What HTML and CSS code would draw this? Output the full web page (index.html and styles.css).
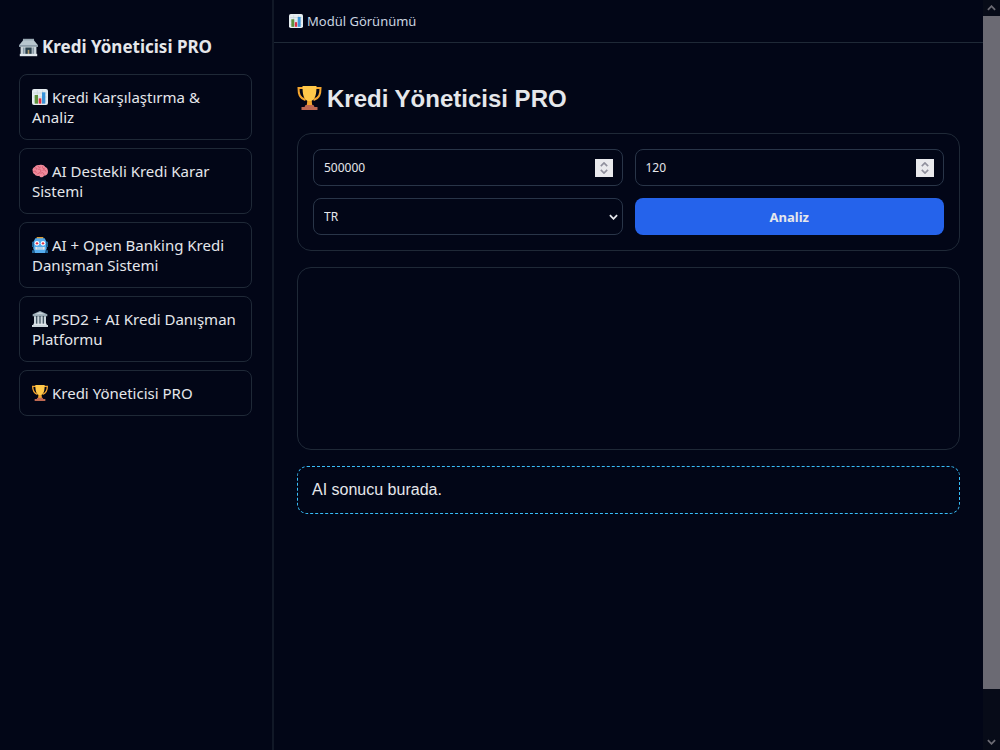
FILE: index.html
```html
<!DOCTYPE html>
<html lang="tr">
<head>
  <meta charset="UTF-8" />
  <title>Kredi Yöneticisi PRO</title>
  <meta name="viewport" content="width=device-width, initial-scale=1.0" />
  <link rel="stylesheet" href="styles.css">
</head>
<body>

  <!-- Icons -->
  <svg class="sprite" aria-hidden="true">
    <symbol id="i-bank" viewBox="0 0 24 24">
      <path fill="#9aaab4" d="M5 1h14v3H5z"/>
      <path fill="#b8c6ce" d="M5 3h14l5 6v2H0V9z"/>
      <path fill="#8899a6" d="M0 9h24v2H0z"/>
      <path fill="#cbd5da" d="M2 11h20v10H2z"/>
      <path fill="#8899a6" d="M5 12h2v9H5zM17 12h2v9h-2z"/>
      <path fill="#29404d" d="M8 12h8v9H8z"/>
      <path fill="#b39a6a" d="M11 15h2v6h-2z"/>
      <path fill="#e1e8ed" d="M1 20h22v3H1z"/>
    </symbol>
    <symbol id="i-chart" viewBox="0 0 24 24">
      <rect width="24" height="24" rx="3" fill="#e6edf1"/>
      <path stroke="#c2d0d8" d="M2 6h20M2 12h20M2 18h20M8 2v20M16 2v20"/>
      <path fill="#5c913b" d="M4 9h5v13H4z"/>
      <path fill="#dd2e44" d="M10 14h4v8h-4z"/>
      <path fill="#3b94d9" d="M15 5h5v17h-5z"/>
    </symbol>
    <symbol id="i-brain" viewBox="0 0 24 24">
      <path fill="#f08a9b" d="M1 12c-1-3 1-5 3-6 2-3 5-3 7-3 4-1 7 0 9 3 3 1 4 4 4 7 0 4-3 6-6 6-2 3-6 3-7 0-3 1-6 0-7-2-2-1-3-3-3-5z"/>
      <path fill="none" stroke="#d0546c" stroke-width="1.3" d="M4 8c2-2 4 0 3 2M9 4c0 3 3 3 4 2M2 13c3-2 5 0 4 2M9 10c2-2 5 0 4 3s-5 2-5 4M16 5c-1 3 1 4 3 3M16 11c2-2 5 0 5 2M13 16c2-3 5-1 5 2"/>
    </symbol>
    <symbol id="i-robot" viewBox="0 0 24 24">
      <path fill="#d99a35" d="M7 0h10v3H7z"/>
      <path fill="#55acee" d="M5 2h14l3 6v9l-2 7H4l-2-7V8z"/>
      <path fill="#226699" d="M0 7h3v8H0zM21 7h3v8h-3zM0 20h4v4H0zM20 20h4v4h-4z"/>
      <circle cx="7.500" cy="9.500" r="3.500" fill="#fff"/>
      <circle cx="16.500" cy="9.500" r="3.500" fill="#fff"/>
      <circle cx="7.500" cy="9.500" r="1.800" fill="#dd2e44"/>
      <circle cx="16.500" cy="9.500" r="1.800" fill="#dd2e44"/>
      <path fill="#e6e7e8" d="M5 15h14v4H5z"/>
      <path stroke="#55acee" d="M9 15v4M12 15v4M15 15v4"/>
    </symbol>
    <symbol id="i-temple" viewBox="0 0 24 24">
      <path fill="#99aab5" d="M12 0l11 5v3H1V5z"/>
      <path fill="#ccd6dd" d="M12 2l8 3H4z"/>
      <path fill="#465a67" d="M3 8h18v12H3z"/>
      <path fill="#ccd6dd" d="M3 8h3v12H3zM8 8h3v12H8zM13 8h3v12h-3zM18 8h3v12h-3z"/>
      <path fill="#e1e8ed" d="M2 19h20v2H2z"/>
      <path fill="#ccd6dd" d="M0 21h24v3H0z"/>
    </symbol>
    <symbol id="i-trophy" viewBox="0 0 24 24">
      <path fill="none" stroke="#f5a52e" stroke-width="2" d="M6 2H1c0 6 1 10 7 12M18 2h5c0 6-1 10-7 12"/>
      <path fill="#ffc84a" d="M5 0h14c0 8-1 13-5 15v4h-4v-4C6 13 5 8 5 0z"/>
      <path fill="#f5a52e" d="M10 15h4l1 5H9z"/>
      <path fill="#bf6952" d="M8 19h8l1 2h3v3H4v-3h3z"/>
    </symbol>
    <symbol id="i-down" viewBox="0 0 10 6">
      <path fill="none" stroke="currentColor" stroke-width="2" d="M1 1l4 4 4-4"/>
    </symbol>
    <symbol id="i-up" viewBox="0 0 10 6">
      <path fill="none" stroke="currentColor" stroke-width="2" d="M1 5l4-4 4 4"/>
    </symbol>
  </svg>

  <aside class="sidebar">
    <h2><svg class="icon"><use href="#i-bank"/></svg>Kredi Yöneticisi PRO</h2>
    <nav class="menu">
      <a href="#karsilastirma"><svg class="icon"><use href="#i-chart"/></svg>Kredi Karşılaştırma &amp; Analiz</a>
      <a href="#karar"><svg class="icon"><use href="#i-brain"/></svg>AI Destekli Kredi Karar Sistemi</a>
      <a href="#openbanking"><svg class="icon"><use href="#i-robot"/></svg>AI + Open Banking Kredi Danışman Sistemi</a>
      <a href="#psd2"><svg class="icon"><use href="#i-temple"/></svg>PSD2 + AI Kredi Danışman Platformu</a>
      <a href="#pro"><svg class="icon"><use href="#i-trophy"/></svg>Kredi Yöneticisi PRO</a>
    </nav>
  </aside>

  <div class="view">
    <header class="topbar"><svg class="icon"><use href="#i-chart"/></svg>Modül Görünümü</header>

    <main class="content">
      <h1><svg class="icon"><use href="#i-trophy"/></svg>Kredi Yöneticisi PRO</h1>

      <form class="card form">
        <div class="field">
          <input type="number" id="amount" value="500000" aria-label="Kredi tutarı">
          <span class="spin"><svg><use href="#i-up"/></svg><svg><use href="#i-down"/></svg></span>
        </div>
        <div class="field">
          <input type="number" id="term" value="120" aria-label="Vade">
          <span class="spin"><svg><use href="#i-up"/></svg><svg><use href="#i-down"/></svg></span>
        </div>
        <div class="field">
          <select id="country" aria-label="Ülke">
            <option>TR</option>
          </select>
          <svg class="caret"><use href="#i-down"/></svg>
        </div>
        <button type="button">Analiz</button>
      </form>

      <section class="card chart"></section>

      <div class="result">AI sonucu burada.</div>
    </main>
  </div>

  <div class="scroll" aria-hidden="true">
    <svg><use href="#i-up"/></svg>
    <div class="thumb"></div>
    <div class="rest"></div>
    <svg><use href="#i-down"/></svg>
  </div>

</body>
</html>
```
FILE: styles.css
```css
* {
  box-sizing: border-box;
}

body {
  margin: 0;
  min-height: 100vh;
  display: flex;
  background: #020617;
  color: #e5e7eb;
  font-family: "Noto Sans", sans-serif;
}

.sprite {
  position: absolute;
  width: 0;
  height: 0;
}

.icon {
  width: 16px;
  height: 16px;
  margin-right: 4px;
  vertical-align: -2px;
}

/* Sidebar */
.sidebar {
  flex: none;
  width: 274px;
  padding: 35px 20px 20px 19px;
  border-right: 2px solid #111827;
}

.sidebar h2 {
  margin: 0 0 15px;
  font-size: 17px;
  line-height: 24px;
}

.sidebar h2 .icon {
  width: 19px;
  height: 19px;
  vertical-align: -4px;
}

.menu {
  display: flex;
  flex-direction: column;
  gap: 8px;
}

.menu a {
  padding: 12px;
  border: 1px solid #1f2937;
  border-radius: 8px;
  color: inherit;
  font-size: 15px;
  line-height: 20px;
  text-decoration: none;
}

/* Main view */
.view {
  flex: 1;
  min-width: 0;
}

.topbar {
  padding: 12px 15px 11px;
  border-bottom: 1px solid #1f2937;
  color: #cbd5e1;
  font-size: 13px;
  line-height: 19px;
}

.topbar .icon {
  width: 14px;
  height: 14px;
}

.content {
  padding: 40px 23px;
  font-family: "Liberation Sans", Arial, sans-serif;
}

h1 {
  margin: 0 0 18px;
  font-size: 24px;
  line-height: 32px;
}

h1 .icon {
  width: 25px;
  height: 24px;
  margin-right: 5px;
  vertical-align: -3px;
}

.card {
  margin-bottom: 16px;
  padding: 16px;
  border: 1px solid #1f2937;
  border-radius: 14px;
}

.form {
  display: grid;
  grid-template-columns: 1fr 1fr;
  gap: 12px;
  padding: 15px;
}

.field {
  position: relative;
}

input,
select,
button {
  display: block;
  width: 100%;
  height: 37px;
  padding: 0 10px;
  border: 1px solid #293548;
  border-radius: 8px;
  background: #020617;
  color: #e5e7eb;
  font: 12px "Noto Sans", sans-serif;
  appearance: none;
}

input {
  appearance: textfield;
}

button {
  border: none;
  background: #2563eb;
  font-size: 13px;
  font-weight: 700;
}

.spin {
  position: absolute;
  top: 10px;
  right: 10px;
  width: 18px;
  height: 18px;
  display: flex;
  flex-direction: column;
  align-items: center;
  justify-content: space-between;
  padding: 3px;
  background: #e9e9ed;
  color: #8f8f9d;
  pointer-events: none;
}

.spin svg {
  width: 8px;
  height: 5px;
}

.caret {
  position: absolute;
  top: 16px;
  right: 5px;
  width: 9px;
  height: 6px;
  pointer-events: none;
}

.chart {
  height: 183px;
}

.result {
  padding: 14px;
  border: 1px dashed #38bdf8;
  border-radius: 10px;
  font-size: 16px;
  line-height: 18px;
}

/* Scroll rail */
.scroll {
  flex: none;
  width: 17px;
  display: flex;
  flex-direction: column;
  align-items: center;
  background: #070b18;
  color: #6b6a73;
}

.scroll svg {
  flex: none;
  width: 9px;
  height: 6px;
  margin: 5px 0;
}

.thumb {
  flex: 15;
  width: 100%;
  background: #6b6a73;
}

.rest {
  flex: 1;
}
```
